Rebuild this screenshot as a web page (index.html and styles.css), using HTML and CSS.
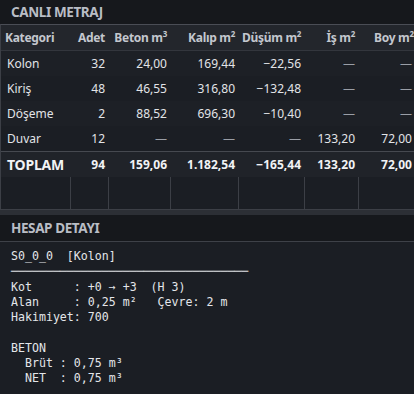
FILE: index.html
```html
<!DOCTYPE html>
<html lang="tr">
<head>
    <meta charset="UTF-8">
    <meta name="viewport" content="width=device-width, initial-scale=1.0">
    <title>Canlı Metraj</title>
    <link rel="stylesheet" href="styles.css">
</head>
<body>

<div class="panel-title">CANLI METRAJ</div>

<div class="table-wrap">
    <table class="metraj">
        <colgroup>
            <col style="width: 69px">
            <col style="width: 38px">
            <col style="width: 62px">
            <col style="width: 68px">
            <col style="width: 66px">
            <col style="width: 54px">
            <col style="width: 57px">
        </colgroup>
        <thead>
            <tr>
                <th class="left">Kategori</th>
                <th>Adet</th>
                <th>Beton m<sup>3</sup></th>
                <th>Kalıp m<sup>2</sup></th>
                <th>Düşüm m<sup>2</sup></th>
                <th>İş m<sup>2</sup></th>
                <th class="last">Boy m<sup>2</sup></th>
            </tr>
        </thead>
        <tbody>
            <tr>
                <td class="left">Kolon</td>
                <td>32</td>
                <td>24,00</td>
                <td>169,44</td>
                <td>−22,56</td>
                <td class="none">—</td>
                <td class="none">—</td>
            </tr>
            <tr>
                <td class="left">Kiriş</td>
                <td>48</td>
                <td>46,55</td>
                <td>316,80</td>
                <td>−132,48</td>
                <td class="none">—</td>
                <td class="none">—</td>
            </tr>
            <tr>
                <td class="left">Döşeme</td>
                <td>2</td>
                <td>88,52</td>
                <td>696,30</td>
                <td>−10,40</td>
                <td class="none">—</td>
                <td class="none">—</td>
            </tr>
            <tr>
                <td class="left">Duvar</td>
                <td>12</td>
                <td class="none">—</td>
                <td class="none">—</td>
                <td class="none">—</td>
                <td>133,20</td>
                <td>72,00</td>
            </tr>
            <tr class="total">
                <td class="left">TOPLAM</td>
                <td>94</td>
                <td>159,06</td>
                <td>1.182,54</td>
                <td>−165,44</td>
                <td>133,20</td>
                <td>72,00</td>
            </tr>
            <tr class="filler">
                <td></td><td></td><td></td><td></td><td></td><td></td><td></td>
            </tr>
        </tbody>
    </table>
</div>

<div class="splitter"></div>

<div class="panel-title detail-title">HESAP DETAYI</div>

<pre class="detail">S0_0_0  [Kolon]
──────────────────────────────────
Kot      : +0 → +3  (H 3)
Alan     : 0,25 m²   Çevre: 2 m
Hakimiyet: 700

BETON
  Brüt : 0,75 m³
  NET  : 0,75 m³</pre>

</body>
</html>
```

FILE: styles.css
```css
body {
    margin: 0;
    width: 414px;
    height: 394px;
    overflow: hidden;
    background-color: #1b1e24;
    color: #e2e4e8;
    font-family: "Segoe UI", "Noto Sans", sans-serif;
}
.panel-title {
    height: 24px;
    line-height: 24px;
    padding-left: 11px;
    background-color: #16181c;
    color: #b9bdc5;
    font-size: 13.5px;
    font-weight: bold;
    letter-spacing: -0.4px;
}
.table-wrap {
    border-top: 1px solid #4a4d55;
    border-left: 1px solid #3c3f46;
    overflow: hidden;
}
.metraj {
    width: 414px;
    table-layout: fixed;
    border-collapse: collapse;
    font-size: 12px;
}
.metraj th, .metraj td {
    height: 25px;
    padding: 0 3px 0 4px;
    text-align: right;
    white-space: nowrap;
    overflow: visible;
}
.metraj th {
    background-color: #23262c;
    color: #c3c7ce;
    font-weight: bold;
    letter-spacing: -0.3px;
    border-bottom: 1px solid #33363d;
}
.metraj th.last {
    padding-right: 0;
    text-align: left;
    padding-left: 16px;
}
.metraj th.left {
    padding-left: 4px;
}
.metraj .left {
    text-align: left;
    padding-left: 6px;
}
.metraj sup {
    font-size: 8px;
    line-height: 0;
}
.metraj tbody tr {
    background-color: #1d2026;
}
.metraj tbody tr:nth-child(even) {
    background-color: #1b1e24;
}
.metraj td.none {
    color: #9a9ea6;
}
.metraj tr.total {
    background-color: #202329;
    border-top: 1px solid #464950;
    font-weight: bold;
    color: #f2f3f5;
}
.metraj tr.total td.left {
    font-size: 14px;
    letter-spacing: -0.2px;
}
.metraj tr.filler {
    background-color: #1b1e24;
}
.metraj tr.filler td {
    height: 32px;
    padding: 0;
    border-right: 1px solid #3c3f46;
    border-bottom: 1px solid #3c3f46;
}
.splitter {
    height: 5px;
    background-color: #2c2f35;
}
.detail-title {
    height: 26px;
    line-height: 26px;
    border-bottom: 1px solid #3e4148;
}
.detail {
    margin: 0;
    padding: 7px 11px;
    font-family: "DejaVu Sans Mono", "Liberation Mono", monospace;
    font-size: 11.6px;
    line-height: 15.3px;
    color: #e4e6ea;
}
```
